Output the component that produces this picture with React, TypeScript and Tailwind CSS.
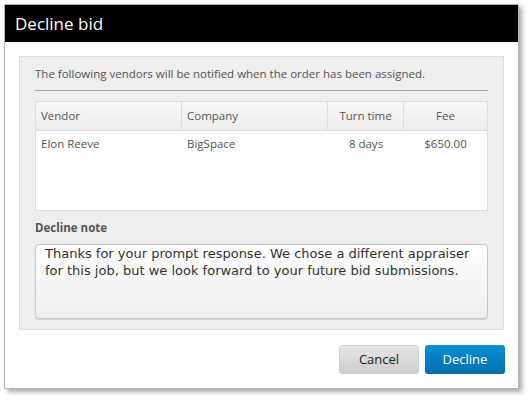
import React from 'react'

const ui = "font-['Open_Sans',sans-serif]"

export default function App() {
  return (
    <div className={`w-[532px] h-[401px] bg-white pl-[4px] pt-[4px] ${ui}`}>
      <div className="w-[515px] h-[385px] flex flex-col bg-white border border-[#b5b5b5] shadow-[3px_3px_5px_rgba(0,0,0,0.35)]">
        <div className="h-[37px] bg-black text-white text-[17px] leading-[37px] pl-[10px] shrink-0">
          Decline bid
        </div>
        <div className="mx-[14px] mt-[14px] h-[274px] bg-[#eeeeee] border border-[#dddddd] px-[15px] pt-[8px]">
          <p className="text-[11.5px] text-[#555] leading-[18px]">
            The following vendors will be notified when the order has been assigned.
          </p>
          <div className="mt-[7px] h-px bg-[#a8a8a8]" />
          <div className="mt-[10px] h-[110px] bg-white border border-[#dddddd] text-[11.5px] text-[#555]">
            <div className="grid grid-cols-[146px_146px_76px_1fr] h-[29px] bg-gradient-to-b from-[#f7f7f7] to-[#ececec] border-b border-[#dddddd]">
              <div className="pl-[5px] leading-[28px] border-r border-[#dddddd]">Vendor</div>
              <div className="pl-[5px] leading-[28px] border-r border-[#dddddd]">Company</div>
              <div className="text-center leading-[28px] border-r border-[#dddddd]">Turn time</div>
              <div className="text-center leading-[28px]">Fee</div>
            </div>
            <div className="grid grid-cols-[146px_146px_76px_1fr] h-[26px] leading-[26px]">
              <div className="pl-[5px]">Elon Reeve</div>
              <div className="pl-[5px]">BigSpace</div>
              <div className="text-center">8 days</div>
              <div className="text-center">$650.00</div>
            </div>
          </div>
          <div className="mt-[8px] text-[11.5px] font-bold text-[#555] leading-[18px]">Decline note</div>
          <div className="mt-[7px] h-[75px] rounded-[4px] border border-[#c8c8c8] bg-gradient-to-b from-white to-[#eeeeee] shadow-[0_1px_1px_rgba(0,0,0,0.12)] px-[9px] pt-[0px] font-['DejaVu_Sans',sans-serif] text-[13px] leading-[17px] text-[#333]">
            Thanks for your prompt response. We chose a different appraiser for this job, but we look forward to your future bid submissions.
          </div>
        </div>
        <div className="flex justify-end gap-[6px] pr-[13px] mt-[15px]">
          <button className="w-[80px] h-[29px] rounded-[3px] bg-gradient-to-b from-[#e6e6e6] to-[#cccccc] border border-[#d0d0d0] text-[13px] text-[#222]">
            Cancel
          </button>
          <button className="w-[80px] h-[29px] rounded-[3px] bg-gradient-to-b from-[#0b8fd7] to-[#006fae] text-[13px] text-white">
            Decline
          </button>
        </div>
      </div>
    </div>
  )
}
